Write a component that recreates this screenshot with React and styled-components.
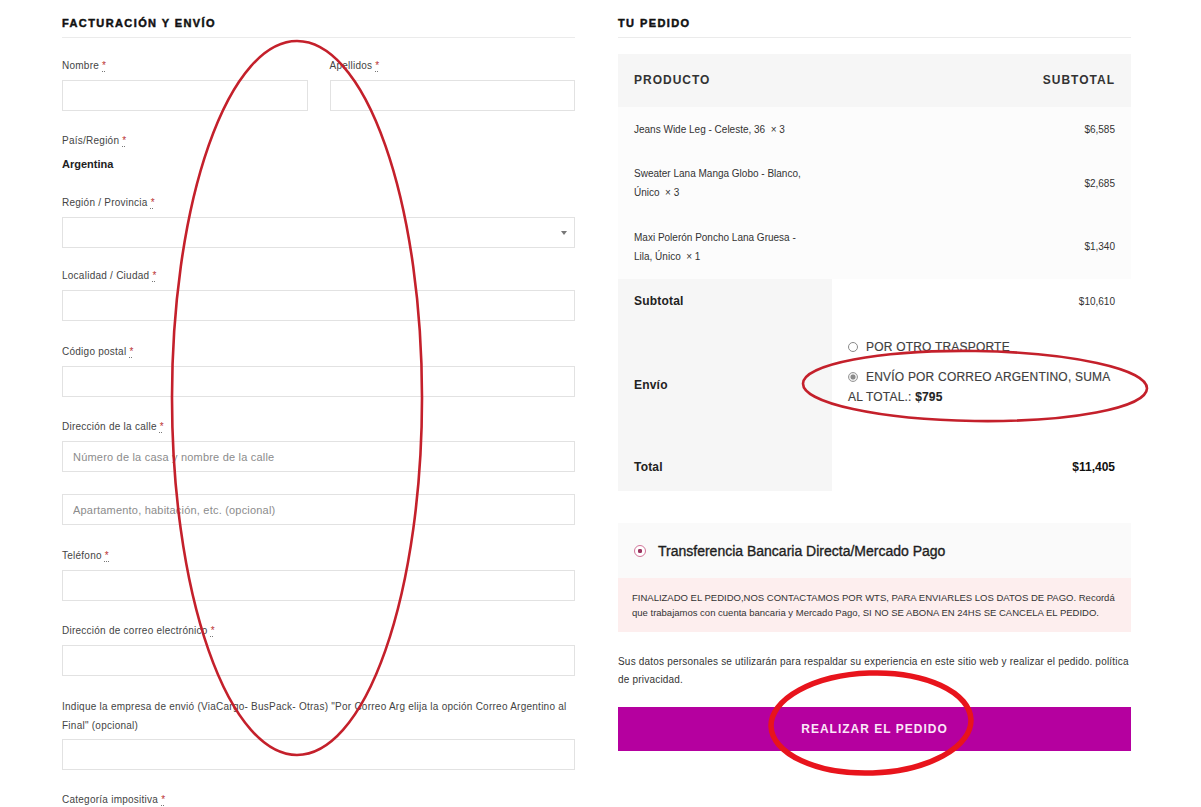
import React from 'react';
import styled, { createGlobalStyle } from 'styled-components';

const GlobalStyle = createGlobalStyle`
  html, body { margin: 0; padding: 0; background: #fff; }
  body { font-family: "Liberation Sans", Arial, sans-serif; color: #333; }
  *, *::before, *::after { box-sizing: border-box; }
`;

const Page = styled.div`
  position: relative;
  width: 1201px;
  height: 807px;
  overflow: hidden;
`;

const Columns = styled.div`
  display: grid;
  grid-template-columns: 513px 513px;
  column-gap: 43px;
  margin-left: 62px;
  align-items: start;
`;

const Column = styled.div`
  display: flex;
  flex-direction: column;
`;

const Heading = styled.h3`
  margin: 0 0 16px;
  padding: 15px 0 6px;
  font-size: 11px;
  line-height: 16px;
  font-weight: 700;
  letter-spacing: 1.4px;
  text-transform: uppercase;
  color: #111;
  -webkit-text-stroke: 0.45px #111;
  border-bottom: 1px solid #ebebeb;
`;

/* ---------- form ---------- */
const Form = styled.div`
  display: flex;
  flex-direction: column;
  padding-top: 1.5px;
`;

const FieldRow = styled.div`
  display: grid;
  grid-template-columns: 1fr 1fr;
  column-gap: 22px;
`;

const Field = styled.div`
  display: flex;
  flex-direction: column;
  margin-bottom: ${(p) => p.$mb ?? 20.5}px;
`;

const Label = styled.label`
  display: block;
  font-size: 10px;
  line-height: ${(p) => p.$lh ?? 20}px;
  letter-spacing: 0.25px;
  color: #444;
  margin-bottom: 4px;
`;

const Req = styled.abbr`
  color: #b33;
  text-decoration: underline dotted #777;
  text-underline-offset: 2px;
`;

const Input = styled.input`
  display: block;
  width: 100%;
  height: 31px;
  margin: ${(p) => (p.$second ? '22px 0 0' : '0')};
  padding: 0 10px;
  border: 1px solid #e2e2e2;
  border-radius: 0;
  background: #fff;
  font-family: "Liberation Sans", Arial, sans-serif;
  font-size: 11px;
  letter-spacing: 0.2px;
  color: #333;
  outline: none;
  &::placeholder { color: #8c8c8c; }
`;

const SelectBox = styled.div`
  display: flex;
  align-items: center;
  justify-content: flex-end;
  height: 31px;
  padding-right: 7px;
  border: 1px solid #e2e2e2;
  background: #fff;
`;

const Caret = styled.span`
  width: 0;
  height: 0;
  border-left: 3.5px solid transparent;
  border-right: 3.5px solid transparent;
  border-top: 4px solid #777;
`;

const Value = styled.strong`
  font-size: 11px;
  line-height: 19px;
  font-weight: 700;
  color: #222;
`;

/* ---------- order table ---------- */
const OrderTable = styled.table`
  width: 513px;
  border-collapse: collapse;
  border-spacing: 0;
  table-layout: fixed;
`;

const HeadCell = styled.th`
  padding: 17px 16px;
  background: #f6f6f6;
  font-size: 12px;
  line-height: 19px;
  font-weight: 700;
  letter-spacing: 1px;
  text-transform: uppercase;
  color: #333;
  text-align: ${(p) => p.$align || 'left'};
`;

const BodyRow = styled.tr`
  background: #fcfcfc;
`;

const BodyCell = styled.td`
  padding: 12.5px 16px 13px;
  font-size: 10px;
  line-height: 19px;
  color: #333;
  vertical-align: middle;
  text-align: ${(p) => p.$align || 'left'};
`;

const ProductName = styled.span`
  display: block;
  max-width: 170px;
`;

const FootHead = styled.th`
  padding: ${(p) => p.$pad || '13.5px 16px 12px'};
  background: #f6f6f6;
  font-size: 12px;
  line-height: 19px;
  font-weight: 700;
  letter-spacing: 0.2px;
  color: #222;
  text-align: left;
  vertical-align: middle;
`;

const FootCell = styled.td`
  padding: ${(p) => p.$pad || '13.5px 16px 12px'};
  background: #fff;
  font-size: ${(p) => (p.$strong ? 12 : 10)}px;
  font-weight: ${(p) => (p.$strong ? 700 : 400)};
  line-height: 19px;
  color: ${(p) => (p.$strong ? '#111' : '#333')};
  text-align: right;
  vertical-align: middle;
`;

const ShipList = styled.ul`
  list-style: none;
  margin: 0 0 26px;
  padding: 0;
  display: flex;
  flex-direction: column;
  gap: 10px;
`;

const ShipOption = styled.li`
  font-size: 12px;
  line-height: 20px;
  letter-spacing: 0.2px;
  color: #404040;
  text-transform: uppercase;
  text-align: left;
  -webkit-text-stroke: 0.15px #404040;
`;

const ShipRadio = styled.span`
  display: inline-block;
  width: 10px;
  height: 10px;
  margin-right: 8px;
  border-radius: 50%;
  border: 1px solid ${(p) => (p.$checked ? '#9a9a9a' : '#8a8a8a')};
  background: ${(p) => (p.$checked ? 'radial-gradient(circle, #8a8a8a 0 2.2px, #e9e9e9 2.8px)' : '#fff')};
  vertical-align: -1px;
`;

const Price = styled.strong`
  font-weight: 700;
  color: #222;
`;

/* ---------- payment ---------- */
const Payment = styled.div`
  margin-top: 32px;
  display: flex;
  flex-direction: column;
`;

const PaymentHead = styled.div`
  display: flex;
  align-items: center;
  gap: 12px;
  padding: 18.5px 16px 17px;
  background: #fafafa;
  font-size: 14px;
  line-height: 20px;
  color: #1e1e1e;
  -webkit-text-stroke: 0.35px #1e1e1e;
`;

const PayRadio = styled.span`
  flex: none;
  width: 12px;
  height: 12px;
  border-radius: 50%;
  border: 1.4px solid #d27499;
  background: radial-gradient(circle, #9a3560 0 1.9px, #fff 2.5px);
`;

const PayBox = styled.div`
  padding: 12px 14px;
  background: #fdeeee;
  font-size: 9.5px;
  line-height: 15px;
  color: #333;
`;

const Privacy = styled.p`
  margin: 21px 0 0;
  font-size: 10px;
  line-height: 18px;
  letter-spacing: 0.2px;
  color: #333;
`;

const OrderButton = styled.button`
  margin-top: 18px;
  height: 44px;
  width: 100%;
  border: 0;
  background: #b5009f;
  color: #fbe7f8;
  font-family: "Liberation Sans", Arial, sans-serif;
  font-size: 12px;
  font-weight: 700;
  letter-spacing: 1px;
  text-transform: uppercase;
  cursor: pointer;
`;

/* ---------- annotation overlay ---------- */
const Annotations = styled.svg`
  position: absolute;
  left: 0;
  top: 0;
  pointer-events: none;
`;

const simpleFields = ['Localidad / Ciudad', 'Código postal'];

const products = [
  { name: 'Jeans Wide Leg - Celeste, 36', qty: 3, price: '$6,585' },
  { name: 'Sweater Lana Manga Globo - Blanco, Único', qty: 3, price: '$2,685' },
  { name: 'Maxi Polerón Poncho Lana Gruesa - Lila, Único', qty: 1, price: '$1,340' },
];

function Required() {
  return <Req title="obligatorio">*</Req>;
}

export default function App() {
  return (
    <Page>
      <GlobalStyle />
      <Columns>
        <Column>
          <Heading>Facturación y envío</Heading>
          <Form>
            <FieldRow>
              <Field>
                <Label>Nombre <Required /></Label>
                <Input readOnly />
              </Field>
              <Field>
                <Label>Apellidos <Required /></Label>
                <Input readOnly />
              </Field>
            </FieldRow>

            <Field $mb={19}>
              <Label>País/Región <Required /></Label>
              <Value>Argentina</Value>
            </Field>

            <Field $mb={18}>
              <Label>Región / Provincia <Required /></Label>
              <SelectBox><Caret /></SelectBox>
            </Field>

            {simpleFields.map((label) => (
              <Field key={label}>
                <Label>{label} <Required /></Label>
                <Input readOnly />
              </Field>
            ))}

            <Field>
              <Label>Dirección de la calle <Required /></Label>
              <Input readOnly placeholder="Número de la casa y nombre de la calle" />
              <Input readOnly $second placeholder="Apartamento, habitación, etc. (opcional)" />
            </Field>

            <Field>
              <Label>Teléfono <Required /></Label>
              <Input readOnly />
            </Field>

            <Field>
              <Label>Dirección de correo electrónico <Required /></Label>
              <Input readOnly />
            </Field>

            <Field>
              <Label $lh={19}>
                Indique la empresa de envió (ViaCargo- BusPack- Otras) "Por Correo Arg elija la opción Correo Argentino al Final" (opcional)
              </Label>
              <Input readOnly />
            </Field>

            <Field>
              <Label>Categoría impositiva <Required /></Label>
            </Field>
          </Form>
        </Column>

        <Column>
          <Heading>Tu pedido</Heading>
          <OrderTable>
            <colgroup>
              <col style={{ width: 214 }} />
              <col />
            </colgroup>
            <thead>
              <tr>
                <HeadCell>Producto</HeadCell>
                <HeadCell $align="right">Subtotal</HeadCell>
              </tr>
            </thead>
            <tbody>
              {products.map((p) => (
                <BodyRow key={p.name}>
                  <BodyCell>
                    <ProductName>
                      {`${p.name}\u00a0\u00a0×\u00a0${p.qty}`}
                    </ProductName>
                  </BodyCell>
                  <BodyCell $align="right">{p.price}</BodyCell>
                </BodyRow>
              ))}
            </tbody>
            <tfoot>
              <tr>
                <FootHead>Subtotal</FootHead>
                <FootCell>$10,610</FootCell>
              </tr>
              <tr>
                <FootHead>Envío</FootHead>
                <FootCell $pad="13.5px 16px 13px">
                  <ShipList>
                    <ShipOption>
                      <ShipRadio />POR OTRO TRASPORTE
                    </ShipOption>
                    <ShipOption>
                      <ShipRadio $checked />ENVÍO POR CORREO ARGENTINO, SUMA AL TOTAL.: <Price>$795</Price>
                    </ShipOption>
                  </ShipList>
                </FootCell>
              </tr>
              <tr>
                <FootHead $pad="12.5px 16px 13.5px">Total</FootHead>
                <FootCell $strong $pad="12.5px 16px 13.5px">$11,405</FootCell>
              </tr>
            </tfoot>
          </OrderTable>

          <Payment>
            <PaymentHead>
              <PayRadio />
              Transferencia Bancaria Directa/Mercado Pago
            </PaymentHead>
            <PayBox>
              FINALIZADO EL PEDIDO,NOS CONTACTAMOS POR WTS, PARA ENVIARLES LOS DATOS DE PAGO. Recordá que trabajamos con cuenta bancaria y Mercado Pago, SI NO SE ABONA EN 24HS SE CANCELA EL PEDIDO.
            </PayBox>
          </Payment>

          <Privacy>
            Sus datos personales se utilizarán para respaldar su experiencia en este sitio web y realizar el pedido. política de privacidad.
          </Privacy>

          <OrderButton type="button">Realizar el pedido</OrderButton>
        </Column>
      </Columns>

      <Annotations width="1201" height="807" viewBox="0 0 1201 807">
        <ellipse cx="297" cy="398" rx="125" ry="357" fill="none" stroke="#c4202b" strokeWidth="2.6" />
        <ellipse cx="975" cy="386" rx="172" ry="35" fill="none" stroke="#c4202b" strokeWidth="2.6" transform="rotate(0.8 975 386)" />
        <ellipse cx="871" cy="723" rx="100" ry="50" fill="none" stroke="#e8141c" strokeWidth="5.5" transform="rotate(-2 871 723)" />
      </Annotations>
    </Page>
  );
}
